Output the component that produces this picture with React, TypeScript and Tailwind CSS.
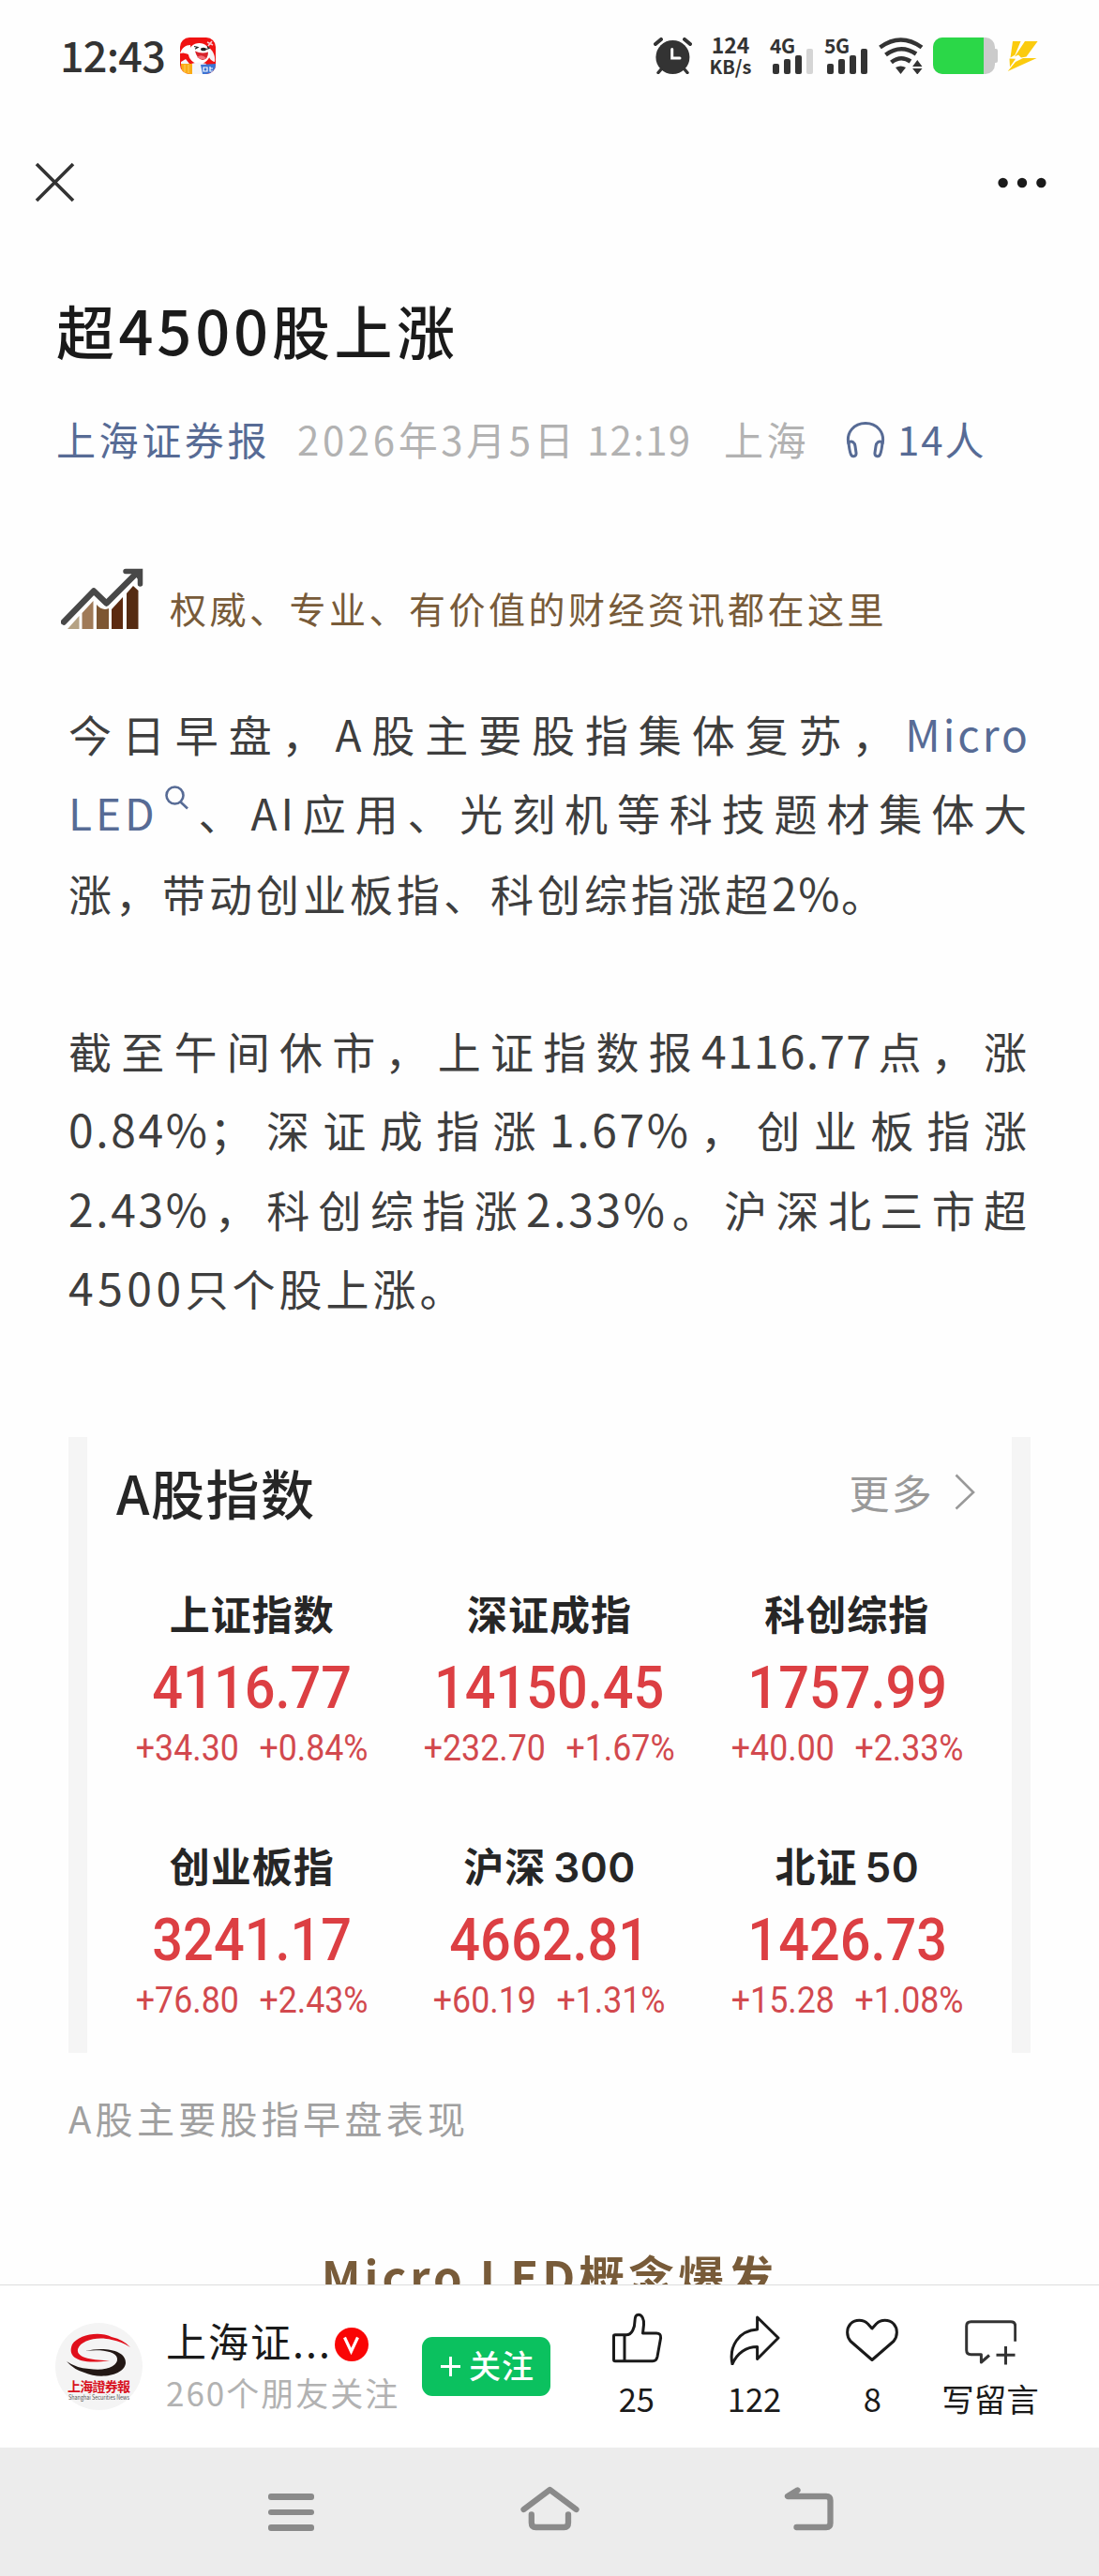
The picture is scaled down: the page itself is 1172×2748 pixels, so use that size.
import type { ReactNode } from "react";

interface IndexQuote {
  name: string;
  suffix?: string;
  value: string;
  change: string;
  percent: string;
}

const quotes: IndexQuote[] = [
  { name: "上证指数", value: "4116.77", change: "+34.30", percent: "+0.84%" },
  { name: "深证成指", value: "14150.45", change: "+232.70", percent: "+1.67%" },
  { name: "科创综指", value: "1757.99", change: "+40.00", percent: "+2.33%" },
  { name: "创业板指", value: "3241.17", change: "+76.80", percent: "+2.43%" },
  { name: "沪深", suffix: "300", value: "4662.81", change: "+60.19", percent: "+1.31%" },
  { name: "北证", suffix: "50", value: "1426.73", change: "+15.28", percent: "+1.08%" },
];

function AppBadge() {
  return (
    <svg width="38" height="39" viewBox="0 0 38 39">
      <clipPath id="badge">
        <rect width="38" height="39" rx="10" />
      </clipPath>
      <g clipPath="url(#badge)">
        <rect width="38" height="39" fill="#f01212" />
        <path d="M0 17C2 11 6 8 11 8L12 20Q6 15 0 17Z" fill="#fff" />
        <path d="M30 10C34 13 38 18 37 26C32 25 30 20 29 15Z" fill="#f6f1f3" />
        <ellipse cx="20.500" cy="17" rx="11.500" ry="11" fill="#fff" />
        <path d="M1 26l5-3 4 5H1zM12 28Q20 25 28 28L24 39H13Z" fill="#f3f5fa" />
        <path d="M16 14.500Q23 18 30 15.500Q30 23.500 24 24Q18 23 16 14.500Z" fill="#d8232b" />
        <path d="M18 21Q23 17 28 22Q24 25 18 21Z" fill="#f2727a" />
        <path d="M15 9.500l4 1-3 1.800M29 9.500l2 2-3 1" stroke="#222" strokeWidth="1.2" fill="none" />
        <ellipse cx="25" cy="12.500" rx="3" ry="1.800" fill="#222" />
        <path d="M29 5l6 3M34 4l-4 5" stroke="#f9c7cf" strokeWidth="1.600" />
        <path d="M1 28H13V39H5Q1 36 1 28Z" fill="#fbab16" />
        <path d="M5 29v9M9 29v9" stroke="#fdca55" strokeWidth="1.200" />
        <path d="M22 29l16-1V39H24Z" fill="#3c74d4" />
        <path d="M25 32h4v4h-4zM32 31v5h3M32 33h3" stroke="#fff" strokeWidth="1.200" fill="none" />
      </g>
    </svg>
  );
}

function AlarmIcon() {
  return (
    <svg width="41" height="39" viewBox="0 0 41 39" fill="none" strokeLinecap="round">
      <circle cx="20.400" cy="21" r="18" fill="#333" />
      <path d="M2 7L8 2M39 7L33 2" stroke="#333" strokeWidth="4" />
      <path d="M8 34L5 37.500M33 34L36 37.500" stroke="#333" strokeWidth="3.400" />
      <path d="M19.700 12.500V22H28" stroke="#fff" strokeWidth="3" />
    </svg>
  );
}

function Signal({ label, weak }: { label: string; weak?: boolean }) {
  return (
    <div className="flex h-[40px] w-[46px] flex-col">
      <span className="h-[12px] text-[21px] leading-[17px] font-bold tracking-[-0.5px]">{label}</span>
      <div className="ml-[3px] flex h-[27px] items-end gap-[5px]">
        <i className="h-[11px] w-[7px] rounded-[2px] bg-[#333]" />
        <i className="h-[16px] w-[7px] rounded-[2px] bg-[#333]" />
        <i className="h-[20px] w-[7px] rounded-[2px] bg-[#333]" />
        <i className={weak ? "h-[27px] w-[7px] rounded-[2px] bg-[#d5d5d5]" : "h-[27px] w-[7px] rounded-[2px] bg-[#333]"} />
      </div>
    </div>
  );
}

function WifiIcon() {
  return (
    <svg width="48" height="39" viewBox="0 0 48 39" fill="none" stroke="#333" strokeWidth="4.600">
      <path d="M1.500 10.500Q23.500-5.500 46 10.500" />
      <path d="M7.500 18.500Q23.500 6.500 40 17.500" />
      <path d="M13.500 26.500Q23.500 18.500 34 25.500" />
      <path d="M18 32Q23.500 29 29 32L23.500 39Z" fill="#333" stroke="none" />
      <path d="M41.300 24L46.500 31H36.100ZM41.300 39.500L46.500 33H36.100Z" fill="#333" stroke="none" />
    </svg>
  );
}

function Battery() {
  return (
    <div className="flex items-center">
      <div className="h-[39px] w-[66px] overflow-hidden rounded-[10px] bg-[#cbcbcb]">
        <div className="h-full w-[54px] bg-[#2bd748]" />
      </div>
      <div className="h-[15px] w-[3px] rounded-r-[2px] bg-[#cbcbcb]" />
    </div>
  );
}

function StatusBar() {
  return (
    <div className="flex h-[119px] items-start pt-[40px] pl-[64px] text-[#333]">
      <span className="w-[128px] text-[45px] leading-[36px] font-medium tracking-[-0.800px]">12:43</span>
      <AppBadge />
      <div className="ml-[467px]">
        <AlarmIcon />
      </div>
      <div className="ml-[13px] flex w-[56px] flex-col text-center font-bold">
        <span className="text-[23px] leading-[15px]">124</span>
        <span className="mt-[8px] text-[20px] leading-[16px]">KB/s</span>
      </div>
      <div className="ml-[14px]">
        <Signal label="4G" weak />
      </div>
      <div className="ml-[12px]">
        <Signal label="5G" />
      </div>
      <div className="ml-[12px] flex">
        <WifiIcon />
      </div>
      <div className="ml-[10px]">
        <Battery />
      </div>
      <svg className="mt-[4px] ml-[10px]" width="34" height="33" viewBox="0 0 34 33" fill="#fbcb0e">
        <path d="M6 0H14.500L8.500 14.500L3.500 17.500Z" />
        <path d="M19 0H32.600L20.500 16.500L15 17.500L12 14.500L8 16.500Z" />
        <path d="M2.500 18.500L9 18.800L3 27.500ZM17 18H31.600L0.700 32L9 22Z" />
      </svg>
    </div>
  );
}

function Line({ children }: { children: ReactNode }) {
  return <div className="h-[84.3px] whitespace-nowrap text-justify [text-align-last:justify]">{children}</div>;
}

function Num({ children }: { children: ReactNode }) {
  return <span className="text-[48px] tracking-[2.600px]">{children}</span>;
}

function TrendIcon() {
  return (
    <svg width="88" height="66" viewBox="0 0 88 66">
      <path d="M7 65L19.500 51V65Z" fill="#b5a284" />
      <path d="M22.500 65V48L34.500 35V65Z" fill="#a07a58" />
      <path d="M38 65V39Q44 46 51 43V65Z" fill="#7d5632" />
      <path d="M54 65V44L66 31V65Z" fill="#5c2a10" />
      <path d="M70 65V27L77 19L82.500 24V65Z" fill="#552b12" />
      <path d="M3 57.500L35 24.500L48.500 37.500L81 5" fill="none" stroke="#484848" strokeWidth="6.500" strokeLinejoin="round" strokeLinecap="round" />
      <path d="M69 3.500H84.500V17" fill="none" stroke="#484848" strokeWidth="5.500" strokeLinecap="round" />
      <path d="M74 3H85V15Z" fill="#484848" />
    </svg>
  );
}

function IndexCard() {
  return (
    <div className="mt-[118.600px] h-[657px] w-[1026px] border-x-[20px] border-[#f5f5f5] bg-[#fefefe]">
      <div className="flex h-[94px] items-start justify-between pt-[23px] pr-[39px] pl-[31px]">
        <h2 className="text-[57px] leading-[70px] font-medium tracking-[1.500px] text-[#262626]">A股指数</h2>
        <div className="flex items-center">
          <span className="text-[43px] leading-[70px] tracking-[2.200px] text-[#999]">更多</span>
          <svg className="ml-[22px]" width="22" height="40" viewBox="0 0 22 40" fill="none" stroke="#999" strokeWidth="2.600">
            <path d="M1.500 2.500L20 21L1.500 38.500" />
          </svg>
        </div>
      </div>
      <div className="mt-[64px] grid grid-cols-3 gap-y-[70px] px-[17px] text-center">
        {quotes.map((q) => (
          <div key={q.name} className="flex h-[199px] flex-col whitespace-nowrap">
            <span className="h-[60px] text-[43px] leading-[58px] font-bold tracking-[1px] text-[#262626]">
              {q.name}
              {q.suffix && <span className="ml-[8px] font-[Inter] text-[44px] font-semibold tracking-[0.5px]">{q.suffix}</span>}
            </span>
            <span className="mt-[15px] scale-x-[0.915] font-[Roboto] text-[63px] leading-[70px] font-medium text-[#dc3f43]">{q.value}</span>
            <span className="mt-[4px] flex scale-x-[0.94] justify-center gap-[23px] font-[Roboto] text-[38px] leading-[50px] text-[#d2494e]">
              <span>{q.change}</span>
              <span>{q.percent}</span>
            </span>
          </div>
        ))}
      </div>
    </div>
  );
}

function Article() {
  return (
    <div className="h-[2167px] overflow-hidden whitespace-nowrap">
      <h1 className="mt-[41px] pl-[60px] text-[62px] leading-[80px] font-medium tracking-[4.500px] text-[#1a1a1a]">
        超<span className="text-[65px] tracking-[3.800px]">4500</span>股上涨
      </h1>
      <div className="mt-[46px] flex h-[60px] items-start pl-[60px] text-[42px] leading-[60px] tracking-[3.600px] text-[#b2b2b2]">
        <span className="w-[257px] text-[#576b95]">上海证券报</span>
        <span className="w-[455px] tracking-[3.600px]">
          2026年3月5日<span className="tracking-[1.300px]"> 12:19</span>
        </span>
        <span className="w-[130px]">上海</span>
        <svg className="mt-[11px]" width="42" height="40" viewBox="0 0 42 40" fill="none" stroke="#576b95" strokeWidth="3">
          <path d="M3 25C0 12 9 2.500 21 2.500S42 12 39 25" />
          <path d="M3 22.500C7 21 9.500 23 10 27L11 34C11.500 38 7 39 5.500 36Q3.500 31 3 22.500Z" />
          <path d="M39 22.500C35 21 32.500 23 32 27L31 34C30.500 38 35 39 36.500 36Q38.500 31 39 22.500Z" />
        </svg>
        <span className="ml-[13px] tracking-[2px] text-[#576b95]">14人</span>
      </div>
      <div className="mt-[108px] flex h-[73px] items-start pl-[65px]">
        <TrendIcon />
        <span className="mt-[12px] ml-[28px] text-[39px] leading-[60px] tracking-[3.500px] text-[#785b39]">
          权威、专业、有价值的财经资讯都在这里
        </span>
      </div>
      <div className="mt-[61px] px-[73px]">
        <div className="text-[46px] leading-[84.300px] tracking-[4px] text-[#3e3e3e]">
          <Line>
            今日早盘，A股主要股指集体复苏，<span className="tracking-[3px] text-[#576b95]">Micro</span>
          </Line>
          <Line>
            <span className="text-[#576b95]">LED</span>
            <svg className="mr-[5px] ml-[6px] inline-block align-[22px]" width="26" height="26" viewBox="0 0 26 26" fill="none" stroke="#576b95" strokeWidth="2.600">
              <circle cx="11.500" cy="10.500" r="9" />
              <path d="M17.500 17.500L25 24.500" />
            </svg>
            、AI应用、光刻机等科技题材集体大
          </Line>
          <div className="h-[84.3px] w-[844px] text-justify [text-align-last:justify]">
            涨，带动创业板指、科创综指涨超<span className="text-[48px] tracking-[1.600px]">2%</span>。
          </div>
          <div className="h-[84.3px]" />
          <Line>
            截至午间休市，上证指数报<span className="text-[48px] tracking-[1.300px]">4116.77</span>点，涨
          </Line>
          <Line>
            <Num>0.84%</Num>；深证成指涨<Num>1.67%</Num>，创业板指涨
          </Line>
          <Line>
            <Num>2.43%</Num>，科创综指涨<Num>2.33%</Num>。沪深北三市超
          </Line>
          <div className="h-[84.3px]">
            <span className="text-[48px] tracking-[4.500px]">4500</span>只个股上涨。
          </div>
        </div>
        <IndexCard />
        <p className="mt-[39px] text-[40px] leading-[60px] tracking-[4.300px] text-[#a0a0a0]">A股主要股指早盘表现</p>
      </div>
      <h3 className="mt-[98px] text-center text-[49px] leading-[80px] font-bold tracking-[4px] text-[#785b39]">
        Micro LED概念爆发
      </h3>
    </div>
  );
}

function Avatar() {
  return (
    <svg width="93" height="93" viewBox="0 0 93 93">
      <circle cx="46.500" cy="46.500" r="46.500" fill="#f4f4f4" />
      <path d="M60 15C46 8 24 13 18 23C12 37 26 45 58 40C42 40 22 38 24 28C27 18 46 14 60 18Q71 20 80 26Q73 18 60 15Z" fill="#e0101c" />
      <path d="M32 30C52 25 76 29 75 43C73 57 46 60 31 53Q20 50 12 41Q22 48 36 49C54 52 67 46 66 38C65 30 48 28 32 30Z" fill="#231815" />
      <text x="46.500" y="73" textAnchor="middle" fontSize="14" fontWeight="700" textLength="67" fill="#d8101c" className="font-['Noto_Sans_CJK_TC']">
        上海證券報
      </text>
      <text x="46.500" y="81.500" textAnchor="middle" fontSize="7" textLength="65" lengthAdjust="spacingAndGlyphs" fill="#555">
        Shanghai Securities News
      </text>
    </svg>
  );
}

function Action({ label, children }: { label: string; children: ReactNode }) {
  return (
    <div className="flex w-[125.700px] flex-col items-center whitespace-nowrap">
      <svg width="56" height="56" viewBox="0 0 56 56" fill="none" stroke="#1a1a1a" strokeWidth="3" strokeLinejoin="round">
        {children}
      </svg>
      <span className="mt-[15px] text-[34.500px] leading-[40px] text-[#1a1a1a]">{label}</span>
    </div>
  );
}

function BottomBar() {
  return (
    <div className="flex h-[174px] items-start border-t border-[#dedede] bg-white pl-[59px]">
      <div className="mt-[40px]">
        <Avatar />
      </div>
      <div className="mt-[33px] ml-[25px] flex w-[273px] flex-col whitespace-nowrap">
        <div className="flex items-start">
          <span className="w-[180px] text-[43px] leading-[50px] tracking-[2px] text-[#1a1a1a]">上海证...</span>
          <svg className="mt-[12px]" width="36" height="36" viewBox="0 0 36 36">
            <circle cx="18" cy="18" r="18" fill="#fa0505" />
            <path d="M10.500 10.500L17.500 25.500L24.500 10.500" fill="none" stroke="#fff" strokeWidth="3.200" />
          </svg>
        </div>
        <span className="mt-[8px] text-[35px] leading-[46px] tracking-[2px] text-[#b2b2b2]">260个朋友关注</span>
      </div>
      <button className="mt-[55px] flex h-[63px] w-[137px] items-center rounded-[11px] bg-[#0bc15f] pl-[20px] text-white">
        <svg width="21" height="21" viewBox="0 0 21 21" stroke="#fff" strokeWidth="3">
          <path d="M0 10.500H21M10.500 0V21" />
        </svg>
        <span className="mb-[4px] ml-[9px] text-[34px] leading-[40px] font-medium tracking-[1px]">关注</span>
      </button>
      <div className="mt-[29px] ml-[29px] flex">
        <Action label="25">
          <path d="M3.500 25Q3.500 23.700 5 23.700H17C23 23.700 26 16 26 9C26 4.500 27.500 2.200 30 2.200C33.500 2.200 36 7 35.500 13L34.500 22H49Q54 22 53.600 27L50 47Q49 51.700 45 51.700H5Q3.500 51.700 3.500 50ZM15 24V51.700" />
        </Action>
        <Action label="122">
          <path d="M30.600 5L53 27L30.600 49.500V36.500C19 36.500 9 43 4 55C0 36 11 19 30.600 18Z" />
        </Action>
        <Action label="8">
          <path d="M28 17L23.500 12A13.500 13.500 0 0 0 5 12C0.500 17 0.500 25 5 30.500L28 50.500L51 30.500C55.500 25 55.500 17 51 12A13.500 13.500 0 0 0 32.500 12Z" />
        </Action>
        <Action label="写留言">
          <path d="M54.700 30.700V14.500Q54.700 9.700 50 9.700H7.500Q2.700 9.700 2.700 14.500V40Q2.700 44.700 7.500 44.700H18.400V53L27 45.500M34.500 45.300H54.500M44.500 36V55.500" stroke="#333" />
        </Action>
      </div>
    </div>
  );
}

function NavBar() {
  return (
    <div className="flex h-[137px] items-start bg-[#ececec] pt-[41px] pl-[286px]">
      <div className="mt-[8px] flex w-[269px] flex-col gap-[10px]">
        <i className="h-[6.500px] w-[49px] rounded-[3px] bg-[#8a8a8a]" />
        <i className="h-[6.500px] w-[49px] rounded-[3px] bg-[#8a8a8a]" />
        <i className="h-[6.500px] w-[49px] rounded-[3px] bg-[#8a8a8a]" />
      </div>
      <svg width="63" height="48" viewBox="0 0 63 48" fill="none" stroke="#8a8a8a" strokeWidth="6.300" strokeLinecap="round" strokeLinejoin="round">
        <path d="M3.500 25L31.400 4L59.500 25" />
        <path d="M11.800 30.500V39Q11.800 44 16.500 44H46.500Q51 44 51 39V30.500" />
      </svg>
      <svg className="mt-[1px] ml-[218px]" width="54" height="48" viewBox="0 0 54 48" fill="none" stroke="#8a8a8a" strokeWidth="6.300" strokeLinecap="round" strokeLinejoin="round">
        <path d="M14.500 3.500L4 10H45Q49.500 10 49.500 14.500V38.500Q49.500 43 45 43H13.500" />
      </svg>
    </div>
  );
}

export default function App() {
  return (
    <div className="flex h-[2748px] w-[1172px] flex-col overflow-hidden bg-[#fefefe] font-['Noto_Sans_CJK_SC',sans-serif]">
      <StatusBar />
      <div className="flex h-[151px] items-center justify-between pr-[56px] pl-[37px]">
        <svg width="43" height="43" viewBox="0 0 43 43" stroke="#333" strokeWidth="3.600">
          <path d="M2 2L41 41M41 2L2 41" />
        </svg>
        <svg width="52" height="12" viewBox="0 0 52 12" fill="#1a1a1a">
          <circle cx="5.600" cy="6" r="5.200" />
          <circle cx="26" cy="6" r="5.200" />
          <circle cx="46.400" cy="6" r="5.200" />
        </svg>
      </div>
      <Article />
      <BottomBar />
      <NavBar />
    </div>
  );
}
